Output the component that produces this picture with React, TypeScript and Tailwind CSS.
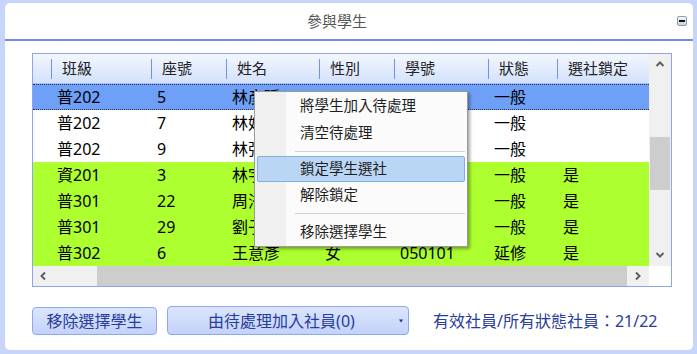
import React from "react"

const widths = ["w-[100px]", "w-[75px]", "w-[93px]", "w-[75px]", "w-[94px]", "w-[69px]", "flex-1"]
const headers = ["班級", "座號", "姓名", "性別", "學號", "狀態", "選社鎖定"]

// gender / id cells of the first rows sit under the context menu
const rows = [
  { cells: ["普202", "5", "林彥廷", "", "", "一般", ""], kind: "sel" },
  { cells: ["普202", "7", "林妤安", "", "", "一般", ""], kind: "white" },
  { cells: ["普202", "9", "林張宇", "", "", "一般", ""], kind: "white" },
  { cells: ["資201", "3", "林宇辰", "", "", "一般", "是"], kind: "green" },
  { cells: ["普301", "22", "周洧安", "", "", "一般", "是"], kind: "green" },
  { cells: ["普301", "29", "劉子晴", "", "", "一般", "是"], kind: "green" },
  { cells: ["普302", "6", "王意彥", "女", "050101", "延修", "是"], kind: "green" },
]

function Chevron({ dir }: { dir: "up" | "down" | "left" | "right" }) {
  const d = {
    up: "M1.5 6 L5 2.5 L8.5 6",
    down: "M1.5 3 L5 6.5 L8.5 3",
    left: "M6 1.5 L2.5 5 L6 8.5",
    right: "M3 1.5 L6.5 5 L3 8.5",
  }[dir]
  return (
    <svg width="10" height="10" viewBox="0 0 10 10">
      <path d={d} fill="none" stroke="#5f5f5f" strokeWidth="2" />
    </svg>
  )
}

function Grid() {
  return (
    <div className="ml-[27px] mt-[12px] flex h-[234px] w-[640px] border border-[#8fa3f0]">
      <div className="flex w-[616px] flex-col">
        <div className="flex h-[30px] items-center border-b border-[#a9bcf4] bg-linear-to-b from-[#f3f7fe] to-[#d3e1fb] text-[15px] text-[#222]">
          <div className="w-[18px]" />
          {headers.map((h, i) => (
            <div key={h} className={`${widths[i]} flex items-center`}>
              <div className="h-[20px] w-px bg-[#7690e8]" />
              <span className="ml-[10px]">{h}</span>
            </div>
          ))}
        </div>
        {rows.map((r, ri) => (
          <div
            key={ri}
            className={
              r.kind === "sel"
                ? "flex h-[26px] items-center border-y border-dotted border-[#2a2f55] bg-[#6da0f6] text-[16px] text-black"
                : r.kind === "green"
                ? "flex h-[26px] items-center bg-[#adff2f] text-[16px] text-black"
                : "flex h-[26px] items-center bg-white text-[16px] text-black"
            }
          >
            <div className="w-[18px]" />
            {r.cells.map((c, i) => (
              <div key={i} className={`${widths[i]} overflow-hidden whitespace-nowrap pl-[6px]`}>
                {c}
              </div>
            ))}
          </div>
        ))}
        <div className="flex h-[20px] items-center bg-[#f0f0f0]">
          <div className="flex w-[20px] justify-center pl-[2px]">
            <Chevron dir="left" />
          </div>
          <div className="ml-[44px] h-[20px] flex-1 bg-[#cdcdcd]" />
          <div className="flex w-[22px] justify-center">
            <Chevron dir="right" />
          </div>
        </div>
      </div>
      <div className="flex w-[22px] flex-col">
        <div className="flex h-[22px] items-center justify-center bg-[#f0f0f0]">
          <Chevron dir="up" />
        </div>
        <div className="flex h-[168px] flex-col bg-[#f0f0f0] px-[1px]">
          <div className="mt-[61px] h-[53px] bg-[#cdcdcd]" />
        </div>
        <div className="flex h-[22px] items-center justify-center bg-[#f0f0f0]">
          <Chevron dir="down" />
        </div>
        <div className="h-[20px] bg-white" />
      </div>
    </div>
  )
}

function Menu() {
  return (
    <div className="absolute left-[254px] top-[91px] flex h-[156px] w-[214px] flex-col border border-[#9a9a9a] bg-[linear-gradient(to_right,#f0f0f0_31px,#fbfbfb_31px)] px-[2px] pb-[1px] text-[14.5px] text-[#1e1e1e] shadow-[2px_2px_3px_rgba(0,0,0,0.35)]">
      <div className="flex h-[27px] items-center pl-[43px]">將學生加入待處理</div>
      <div className="flex h-[27px] items-center pl-[43px]">清空待處理</div>
      <div className="flex h-[10px] items-center">
        <div className="ml-[38px] h-px flex-1 bg-[#d2d2d2]" />
      </div>
      <div className="flex h-[26px] items-center rounded-[2px] border border-[#7fb0e6] bg-[#b9d7f5] pl-[42px]">鎖定學生選社</div>
      <div className="flex h-[26px] items-center pl-[43px]">解除鎖定</div>
      <div className="flex h-[11px] items-center">
        <div className="ml-[38px] h-px flex-1 bg-[#d2d2d2]" />
      </div>
      <div className="flex h-[26px] items-center pl-[43px]">移除選擇學生</div>
    </div>
  )
}

export default function App() {
  return (
    <div className="relative flex h-[354px] w-[697px] flex-col bg-[#c7d5fa] pb-[4px] pl-[5px] pr-[4px] pt-[3px] font-['Noto_Sans','Noto_Sans_CJK_TC',sans-serif]">
      <div className="flex flex-1 flex-col rounded-[5px] bg-white">
        <div className="flex h-[38px] items-center border-b-2 border-[#6e8cf0]">
          <div className="flex flex-1 justify-center pt-[1px] text-[15px] text-[#555]">參與學生</div>
          <div className="w-[24px]">
            <div className="ml-[8px] flex h-[10px] w-[10px] items-center justify-center rounded-[2px] border border-[#8d9bb0] bg-linear-to-b from-[#f6f8fb] to-[#c9d1dd]">
              <div className="h-[2px] w-[6px] bg-[#111]" />
            </div>
          </div>
        </div>
        <Grid />
        <div className="ml-[27px] mt-[19px] flex items-center text-[16px]">
          <div className="flex h-[28px] w-[125px] items-center justify-center rounded-[4px] border border-[#91a8ef] bg-linear-to-b from-[#dbe5fd] to-[#c3d2fa] text-[#2a3c9c]">
            移除選擇學生
          </div>
          <div className="ml-[10px] flex h-[29px] w-[242px] items-center rounded-[4px] border border-[#91a8ef] bg-linear-to-b from-[#dbe5fd] to-[#c3d2fa] text-[#2a3c9c]">
            <div className="flex-1 text-center">由待處理加入社員(0)</div>
            <svg width="12" height="6" viewBox="0 0 12 6" className="mr-[1px]">
              <path d="M4 1.5 L8 1.5 L6 4.5 Z" fill="#223388" />
            </svg>
          </div>
          <div className="ml-[24px] text-[#2a3c9c]">有效社員/所有狀態社員：21/22</div>
        </div>
      </div>
      <Menu />
    </div>
  )
}
